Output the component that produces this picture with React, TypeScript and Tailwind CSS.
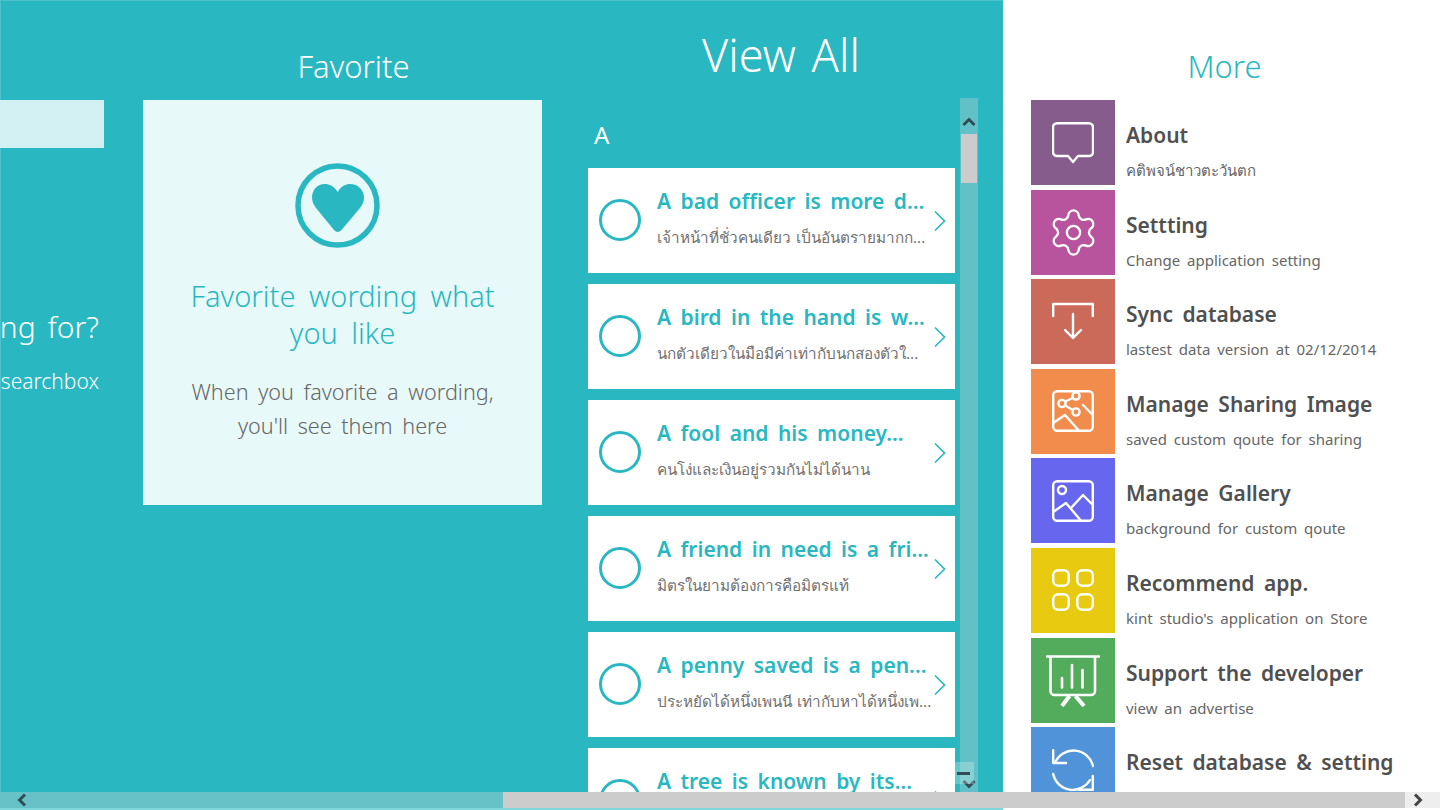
import { Settings } from "lucide-react";
import type { ReactNode } from "react";

const words = [
  ["A bad officer is more d...", "เจ้าหน้าที่ชั่วคนเดียว เป็นอันตรายมากก..."],
  ["A bird in the hand is w...", "นกตัวเดียวในมือมีค่าเท่ากับนกสองตัวใ..."],
  ["A fool and his money...", "คนโง่และเงินอยู่รวมกันไม่ได้นาน"],
  ["A friend in need is a fri...", "มิตรในยามต้องการคือมิตรแท้"],
  ["A penny saved is a pen...", "ประหยัดได้หนึ่งเพนนี เท่ากับหาได้หนึ่งเพ..."],
  ["A tree is known by its...", ""],
];

const Box = ({ children }: { children: ReactNode }) => (
  <svg width="42" height="42" viewBox="0 0 42 42" fill="none" stroke="white" strokeWidth="2.4" strokeLinecap="round" strokeLinejoin="round">
    {children}
  </svg>
);

const icons: ReactNode[] = [
  <Box><path d="M5 1.2H37a4 4 0 0 1 4 4V30a4 4 0 0 1-4 4H26L21 40L16 34H5a4 4 0 0 1-4-4V5.2a4 4 0 0 1 4-4z" /></Box>,
  <Settings size={53} color="white" strokeWidth={1.05} />,
  <Box><path d="M1.2 15V3H40.8V15" /><path d="M21 13V37M13 29L21 37L29 29" /></Box>,
  <Box>
    <rect x="1.2" y="1.2" width="39.6" height="39.6" rx="4" />
    <circle cx="24" cy="6" r="3.6" /><circle cx="10" cy="13.5" r="3.6" /><circle cx="24" cy="22" r="3.6" />
    <path d="M13.2 11.5L20.8 8M13.2 15.5L20.8 20M1.2 33L13 25L27 40.8M31 15L40.8 25" />
  </Box>,
  <Box>
    <rect x="1.2" y="1.2" width="39.6" height="39.6" rx="4" />
    <circle cx="10" cy="10" r="4" />
    <path d="M1.2 32L14 23L29 40.8M19 28L31 15L40.8 25" />
  </Box>,
  <Box>
    <rect x="1.2" y="1.2" width="15.5" height="15.5" rx="5" /><rect x="25.3" y="1.2" width="15.5" height="15.5" rx="5" />
    <rect x="1.2" y="25.3" width="15.5" height="15.5" rx="5" /><rect x="25.3" y="25.3" width="15.5" height="15.5" rx="5" />
  </Box>,
  <svg width="54" height="54" viewBox="0 0 54 54" fill="none" stroke="white" strokeWidth="2.6" strokeLinecap="round" strokeLinejoin="round">
    <path d="M1 3.5H53M4.5 3.5V38a4 4 0 0 0 4 4H45a4 4 0 0 0 4-4V3.5M16 25V34.5M26 12V34.5M36.5 17V34.5" />
    <path d="M23.5 43L16 53M29.5 43L38 53" strokeWidth="4" strokeLinecap="butt" />
  </svg>,
  <Box>
    <path d="M3 14A20 20 0 0 1 41 17M1.2 1.2V14H14" />
    <path d="M1.2 25A20 20 0 0 0 38 31M40.8 27V40.8H27" />
  </Box>,
];

const more = [
  ["bg-[#855c8c]", "About", "คติพจน์ชาวตะวันตก"],
  ["bg-[#b7549d]", "Settting", "Change application setting"],
  ["bg-[#cb6a58]", "Sync database", "lastest data version at 02/12/2014"],
  ["bg-[#f28c4c]", "Manage Sharing Image", "saved custom qoute for sharing"],
  ["bg-[#6666ee]", "Manage Gallery", "background for custom qoute"],
  ["bg-[#e8cb10]", "Recommend app.", "kint studio's application on Store"],
  ["bg-[#53ac5b]", "Support the developer", "view an advertise"],
  ["bg-[#5093d8]", "Reset database & setting", ""],
];

const Chev = ({ d, stroke = "#2f4f57" }: { d: string; stroke?: string }) => (
  <svg width="14" height="14" viewBox="0 0 14 14" fill="none" stroke={stroke} strokeWidth="3">
    <path d={d} />
  </svg>
);

export default function App() {
  return (
    <div className="relative flex h-[810px] w-[1440px] overflow-hidden bg-white font-['Noto_Sans','Liberation_Sans',sans-serif] [word-spacing:4px]">
      <section className="flex h-full w-[1003px] shrink-0 border-l border-t border-[#4cc3cb] bg-[#29b8c1]">
        <div className="flex w-[103px] shrink-0 flex-col items-end pt-[99px] text-white">
          <div className="-ml-[1px] h-12 w-[104px] shrink-0 bg-[#d3f1f2]" />
          <p className="mt-[157px] whitespace-nowrap pr-[5px] text-[30px] font-light leading-[44px] text-white">ng for?</p>
          <p className="mt-[18px] whitespace-nowrap pr-[5px] text-[21px] font-light leading-7">searchbox</p>
        </div>

        <div className="ml-[39px] w-[399px] shrink-0">
          <h2 className="h-[99px] pl-[22px] pt-[43px] text-center text-[31px] font-light leading-[44px] text-white">Favorite</h2>
          <div className="flex h-[405px] flex-col items-center bg-[#e8f9f9] pt-[63px]">
            <svg width="85" height="85" viewBox="0 0 85 85" fill="none" className="-ml-[11px] shrink-0">
              <circle cx="42.5" cy="42.5" r="39.5" stroke="#29b8c1" strokeWidth="5.5" />
              <path d="M42.7 29C39 23 34 21 30 21C22 21 17 27 17 35C17 39 19 42 21 45L39 67Q42.7 71 46.5 67L65 45C67 42 69 39 69 35C69 27 63 21 55 21C51 21 46 23 42.7 29Z" fill="#29b8c1" />
            </svg>
            <p className="mt-[29px] w-[340px] text-center text-[29px] font-light leading-[37px] text-[#29b8c1] [word-spacing:6px]">Favorite wording what you like</p>
            <p className="mt-[24px] w-[340px] text-center text-[21.6px] font-light leading-[34px] text-[#666666]">When you favorite a wording, you'll see them here</p>
          </div>
        </div>

        <div className="ml-[46px] w-[367px] shrink-0">
          <h1 className="h-[99px] pl-[19px] pt-[26px] text-center text-[45px] font-light leading-[56px] text-white">View All</h1>
          <p className="h-[68px] pl-[6px] pt-[19px] text-2xl leading-[32px] text-white">A</p>
          <div className="flex flex-col gap-[11px]">
            {words.map(([title, sub]) => (
              <div key={title} className="flex h-[105px] shrink-0 items-start bg-white pl-[11px]">
                <div className="mt-[31px] h-[42px] w-[42px] shrink-0 rounded-full border-[3px] border-[#29b8c1]" />
                <div className="ml-[16px] w-[272px] min-w-0 pt-[16px]">
                  <p className="whitespace-nowrap text-[21px] font-semibold leading-[34px] text-[#29b8c1]">{title}</p>
                  <p className="mt-[7px] whitespace-nowrap text-[15.3px] leading-6 text-[#717171] [word-spacing:1px]">{sub}</p>
                </div>
                <svg width="12" height="22" viewBox="0 0 12 22" fill="none" stroke="#29b8c1" strokeWidth="1.7" className="ml-[5px] mt-[42px] shrink-0">
                  <path d="M1 1.5L10.5 11L1 20.5" />
                </svg>
              </div>
            ))}
          </div>
        </div>

        <div className="ml-[5px] flex h-[694px] w-[18px] shrink-0 translate-y-[97px] flex-col items-center bg-[#62c1c7]">
          <div className="flex h-9 w-full items-end justify-center pb-[5px]"><Chev d="M1.5 10L7 4.5L12.5 10" /></div>
          <div className="h-[49px] w-4 bg-[#cccccc]" />
          <div className="flex-1" />
          <div className="mb-[1px]"><Chev d="M1.5 4L7 9.5L12.5 4" /></div>
        </div>
      </section>

      <section className="min-w-0 flex-1 pl-[28px]">
        <h2 className="h-[100px] pr-[22px] pt-[44px] text-center text-[31px] font-light leading-[44px] text-[#29b8c1]">More</h2>
        <div className="flex flex-col gap-[4.6px]">
          {more.map(([bg, title, sub], i) => (
            <div key={title} className="flex h-[85px] shrink-0 items-start">
              <div className={`flex h-[85px] w-[84px] shrink-0 items-center justify-center ${bg}`}>{icons[i]}</div>
              <div className="ml-[11px] whitespace-nowrap">
                <p className="pt-[17px] text-[21px] font-semibold leading-[36px] text-[#505050]">{title}</p>
                <p className="mt-[5px] text-[15px] leading-[24px] text-[#666666] [word-spacing:3px]">{sub}</p>
              </div>
            </div>
          ))}
        </div>
      </section>

      <div className="absolute bottom-0 left-0 flex h-[18px] w-[1440px] items-stretch border-b-2 border-[#7fd6db]">
        <div className="flex w-[503px] items-center bg-[#66c2c7] pl-[15px]"><Chev d="M10 1.5L4.5 7L10 12.5" /></div>
        <div className="w-[902px] bg-[#cccccc]" />
        <div className="flex flex-1 items-center justify-end bg-[#eeeeee] pr-[15px]"><Chev d="M4 1.5L9.5 7L4 12.5" stroke="#444444" /></div>
      </div>
      <div className="absolute bottom-0 left-[1003px] h-[2px] w-[437px] bg-white" />
      <div className="absolute left-[952px] top-[762px] flex h-[22px] w-[22px] items-center justify-center bg-white/25">
        <div className="h-[3px] w-[13px] bg-[#2f4f57]" />
      </div>
    </div>
  );
}
